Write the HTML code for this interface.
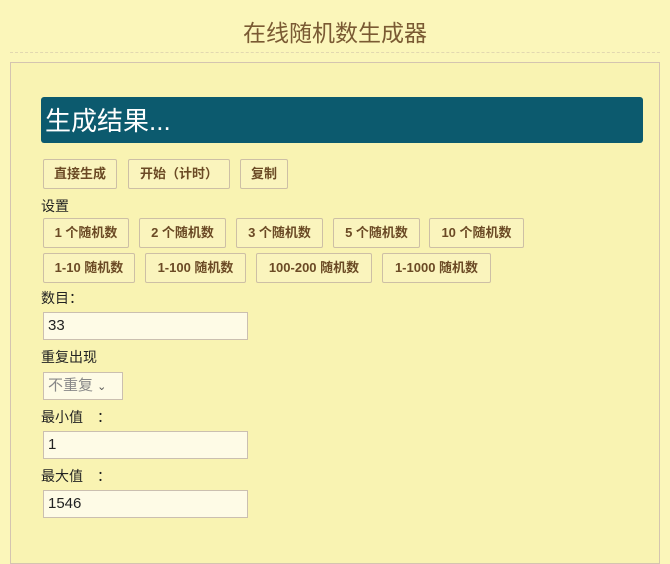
<!DOCTYPE html>
<html><head><meta charset="utf-8"><style>
body{margin:0;width:670px;height:548px;background:#fbf6ba;font-family:"Liberation Sans","Noto Sans CJK SC",sans-serif;position:relative;overflow:hidden;font-size:14px;color:#222}
.title{position:absolute;left:0;width:670px;top:14px;text-align:center;font-size:23px;color:#7a5a33}
.dash{position:absolute;left:10px;right:10px;top:52px;border-top:1px dashed #e2d8b0}
.panel{position:absolute;left:10px;top:62px;width:648px;height:500px;border:1px solid #d4c4b0;background:#f9f3b2}
.res{position:absolute;left:41px;top:97px;width:602px;height:46px;background:#0c5a6e;border-radius:3px;color:#fff;font-size:26px;line-height:48px;text-indent:4px}
.b{position:absolute;height:28px;border:1px solid #cdbfa5;background:#faf4bd;color:#6b4a25;font-size:13px;font-weight:bold;line-height:28px;text-align:center;border-radius:2px}
.l{position:absolute;left:41px;font-size:14px}
.in{position:absolute;left:43px;width:203px;height:26px;border:1px solid #cbbfb0;background:#fefbe6;font-size:15px;line-height:26px;text-indent:4px;color:#222}
</style></head><body>
<div class="title">在线随机数生成器</div>
<div class="dash"></div>
<div class="panel"></div>
<div class="res">生成结果...</div>
<div class="b" style="left:43px;top:159px;width:72px">直接生成</div>
<div class="b" style="left:128px;top:159px;width:100px">开始（计时）</div>
<div class="b" style="left:240px;top:159px;width:46px">复制</div>
<div class="l" style="top:196px">设置</div>
<div class="b" style="left:43px;top:218px;width:84px">1 个随机数</div>
<div class="b" style="left:139px;top:218px;width:85px">2 个随机数</div>
<div class="b" style="left:236px;top:218px;width:85px">3 个随机数</div>
<div class="b" style="left:333px;top:218px;width:85px">5 个随机数</div>
<div class="b" style="left:429px;top:218px;width:93px">10 个随机数</div>
<div class="b" style="left:43px;top:253px;width:90px">1-10 随机数</div>
<div class="b" style="left:145px;top:253px;width:99px">1-100 随机数</div>
<div class="b" style="left:256px;top:253px;width:114px">100-200 随机数</div>
<div class="b" style="left:382px;top:253px;width:107px">1-1000 随机数</div>
<div class="l" style="top:288px">数目：</div>
<div class="in" style="top:312px">33</div>
<div class="l" style="top:347px">重复出现</div>
<div class="in" style="top:372px;width:78px;color:#888">不重复 <span style="font-size:11px;color:#555">⌄</span></div>
<div class="l" style="top:407px">最小值　：</div>
<div class="in" style="top:431px">1</div>
<div class="l" style="top:466px">最大值　：</div>
<div class="in" style="top:490px">1546</div>
</body></html>
